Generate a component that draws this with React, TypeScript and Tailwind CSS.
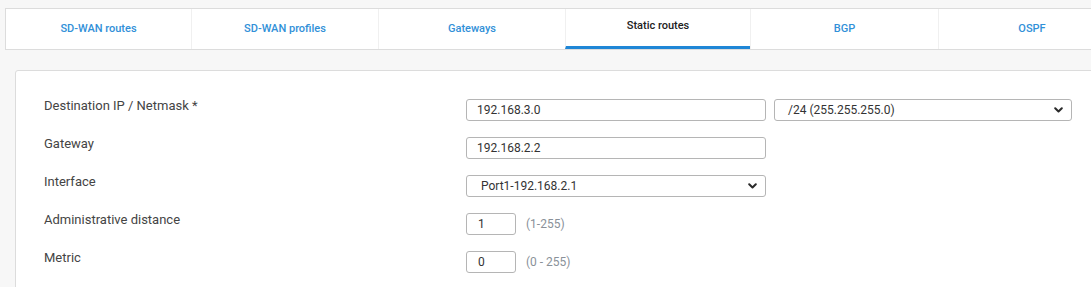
import React from 'react';

const tabs = [
  { label: 'SD-WAN routes', w: 'w-[185px]' },
  { label: 'SD-WAN profiles', w: 'w-[187px]' },
  { label: 'Gateways', w: 'w-[187px]' },
  { label: 'Static routes', w: 'w-[185px]' },
  { label: 'BGP', w: 'w-[188px]' },
  { label: 'OSPF', w: 'w-[187px]' },
];

const Chevron: React.FC = () => (
  <svg width="9" height="6" viewBox="0 0 9 6" className="shrink-0">
    <path d="M1.2 1.2 L4.5 4.5 L7.8 1.2" fill="none" stroke="#2a2a2a" strokeWidth="2" strokeLinecap="round" strokeLinejoin="round" />
  </svg>
);

export default function App() {
  return (
    <div className="w-[1091px] h-[287px] overflow-hidden bg-[#f7f7f7] text-[#444]" style={{ fontFamily: 'Roboto, "Noto Sans", sans-serif' }}>
      {/* TAB BAR */}
      <div className="pt-[8px] pl-[5px]">
        <div className="flex w-[1125px] h-[42px] bg-white border border-[#dcdcdc]">
          {tabs.map((t, i) => {
            const active = t.label === 'Static routes';
            return (
              <div
                key={t.label}
                className={`${t.w} shrink-0 flex items-center justify-center text-[11px] font-medium ${i > 0 ? 'border-l border-[#f0f0f0]' : ''} ${active ? 'text-[#222] border-b-[3px] border-b-[#1f86d6] pb-[3px]' : 'text-[#3190d8]'}`}
              >
                {t.label}
              </div>
            );
          })}
        </div>
      </div>

      {/* FORM PANEL */}
      <div className="mt-[20px] ml-[15px] w-[1100px] h-[260px] bg-white border border-[#dcdcdc] rounded-tl-[3px] pt-[28px] pl-[28px]">
        <div className="flex flex-col gap-[16px] text-[13px]">
          <div className="flex items-start">
            <div className="w-[422px] leading-[14px] pt-[0px]">Destination IP / Netmask *</div>
            <div className="flex gap-[8px]">
              <div className="w-[300px] h-[22px] border border-[#b5b5b5] rounded-[3px] flex items-center pl-[10px] text-[12px] text-[#333]">192.168.3.0</div>
              <div className="w-[298px] h-[22px] border border-[#b5b5b5] rounded-[3px] flex items-center justify-between pl-[13px] pr-[8px] text-[12px] text-[#333]">
                <span>/24 (255.255.255.0)</span>
                <Chevron />
              </div>
            </div>
          </div>
          <div className="flex items-start">
            <div className="w-[422px] leading-[14px]">Gateway</div>
            <div className="w-[300px] h-[22px] border border-[#b5b5b5] rounded-[3px] flex items-center pl-[10px] text-[12px] text-[#333]">192.168.2.2</div>
          </div>
          <div className="flex items-start">
            <div className="w-[422px] leading-[14px]">Interface</div>
            <div className="w-[300px] h-[22px] border border-[#b5b5b5] rounded-[3px] flex items-center justify-between pl-[14px] pr-[8px] text-[12px] text-[#333]">
              <span>Port1-192.168.2.1</span>
              <Chevron />
            </div>
          </div>
          <div className="flex items-start">
            <div className="w-[422px] leading-[14px]">Administrative distance</div>
            <div className="flex items-center gap-[10px]">
              <div className="w-[50px] h-[22px] border border-[#b5b5b5] rounded-[3px] flex items-center pl-[11px] text-[12px] text-[#333]">1</div>
              <span className="text-[12px] text-[#8a9199]">(1-255)</span>
            </div>
          </div>
          <div className="flex items-start">
            <div className="w-[422px] leading-[14px]">Metric</div>
            <div className="flex items-center gap-[10px]">
              <div className="w-[50px] h-[22px] border border-[#b5b5b5] rounded-[3px] flex items-center pl-[11px] text-[12px] text-[#333]">0</div>
              <span className="text-[12px] text-[#8a9199]">(0 - 255)</span>
            </div>
          </div>
        </div>
      </div>
    </div>
  );
}
